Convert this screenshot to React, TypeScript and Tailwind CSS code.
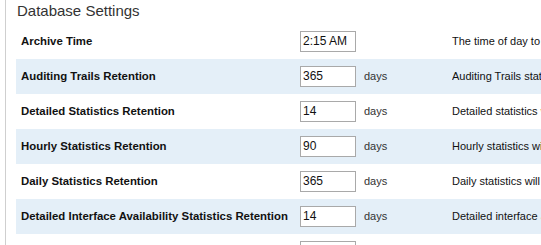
import React from "react";

const rows = [
  { label: "Archive Time", value: "2:15 AM", unit: "", desc: "The time of day to archive statistics and events" },
  { label: "Auditing Trails Retention", value: "365", unit: "days", desc: "Auditing Trails statistics older than this will be deleted" },
  { label: "Detailed Statistics Retention", value: "14", unit: "days", desc: "Detailed statistics will be summarized into hourly statistics" },
  { label: "Hourly Statistics Retention", value: "90", unit: "days", desc: "Hourly statistics will be summarized into daily statistics" },
  { label: "Daily Statistics Retention", value: "365", unit: "days", desc: "Daily statistics will be deleted after this period" },
  { label: "Detailed Interface Availability Statistics Retention", value: "14", unit: "days", desc: "Detailed interface availability statistics" },
  { label: "Hourly Interface Availability Statistics Retention", value: "90", unit: "days", desc: "Hourly interface availability statistics" },
];

export default function App() {
  return (
    <div
      className="w-[541px] h-[245px] overflow-hidden bg-white"
      style={{ fontFamily: '"Liberation Sans", Arial, sans-serif' }}
    >
      <div className="ml-[5px] border-l border-[#cfcfcf] pl-[10px] h-full">
        <div className="h-[24px] pl-px pt-[2px] text-[15px] leading-[18px] text-[#333]">Database Settings</div>
        <div className="flex flex-col">
          {rows.map((r, i) => (
            <div
              key={i}
              className={`flex items-center h-[35px] whitespace-nowrap ${i % 2 === 1 ? "bg-[#e4eff8]" : "bg-white"}`}
            >
              <div className="w-[284px] shrink-0 pl-[5px] text-[11.4px] font-bold text-[#111]">{r.label}</div>
              <div className="w-[56px] h-[21px] shrink-0 border border-[#a9a9a9] bg-white pl-[2px] text-[12px] leading-[19px] text-[#111]">
                {r.value}
              </div>
              <div className="w-[96px] shrink-0 pl-[8px] text-[11px] text-[#333]">{r.unit}</div>
              <div className="text-[11px] text-[#111] overflow-hidden">{r.desc}</div>
            </div>
          ))}
        </div>
      </div>
    </div>
  );
}
